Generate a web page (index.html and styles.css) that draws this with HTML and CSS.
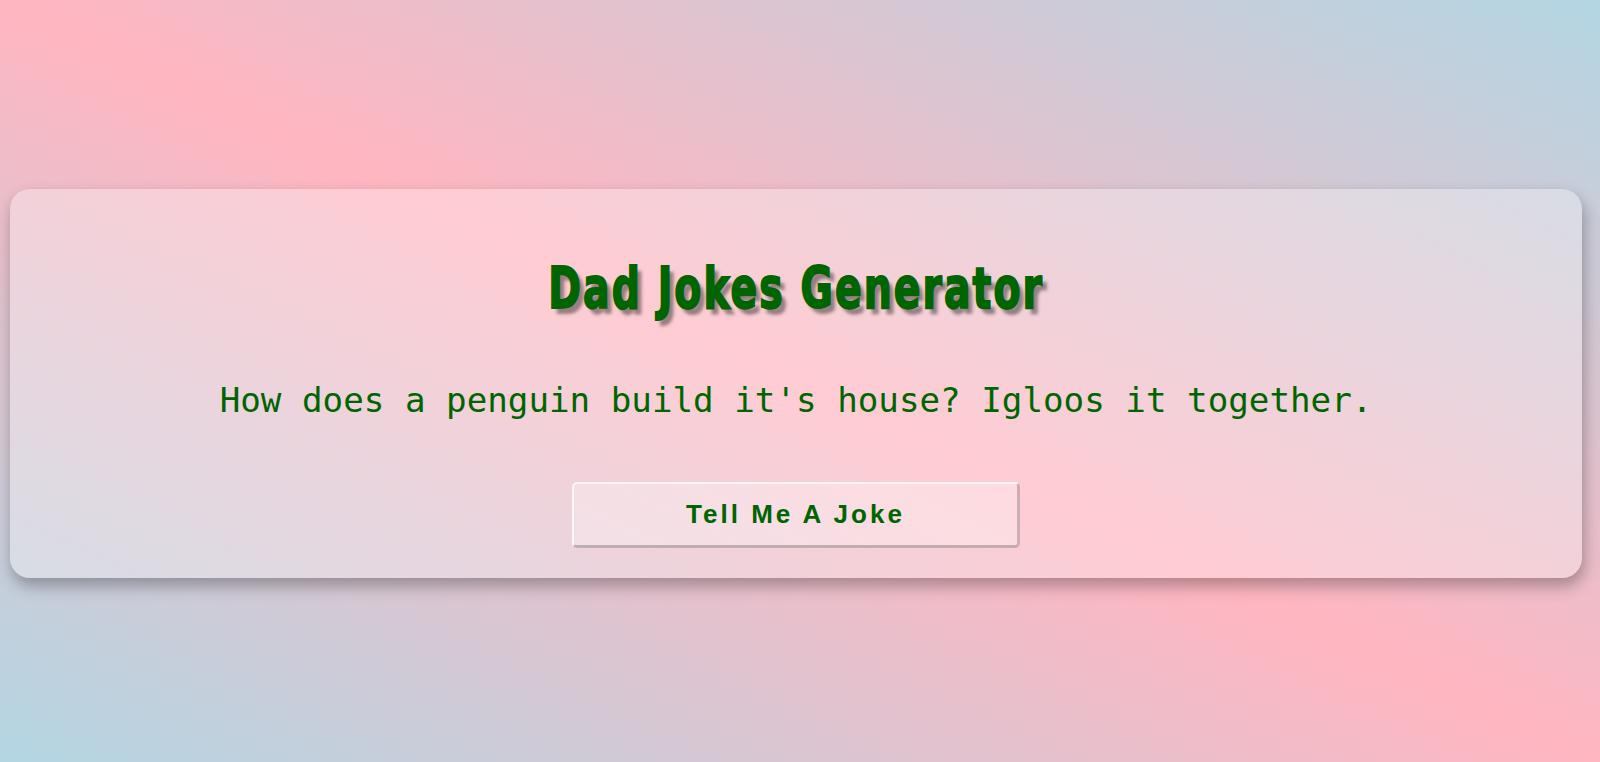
FILE: index.html
```html
<!DOCTYPE html>
<html lang="en">
<head>
<meta charset="utf-8">
<title>Dad Jokes Generator</title>
<link rel="stylesheet" href="styles.css">
</head>
<body>
<main class="page">
  <section class="card">
    <h1 class="title">Dad Jokes Generator</h1>
    <p class="joke">How does a penguin build it's house? Igloos it together.</p>
    <button class="btn" type="button">Tell Me A Joke</button>
  </section>
</main>
</body>
</html>
```

FILE: styles.css
```css
html, body {
  margin: 0;
  height: 100%;
}

body {
  background: linear-gradient(to top right, #b3d6e3, #ffb6c1, #b3d6e3);
  overflow: hidden;
}

.page {
  padding: 189px 18px 0 10px;
}

.card {
  height: 389px;
  box-sizing: border-box;
  display: flex;
  flex-direction: column;
  align-items: center;
  padding: 71px 0 30px;
  background: rgba(255, 255, 255, 0.3);
  border-radius: 20px;
  box-shadow: 2px 8px 16px rgba(0, 0, 0, 0.3);
}

.title {
  margin: 0;
  font-family: Impact, "DejaVu Sans", sans-serif;
  font-weight: 700;
  font-size: 57px;
  line-height: 57px;
  letter-spacing: 3px;
  color: #006400;
  -webkit-text-stroke: 2px #006400;
  text-shadow: 7px 6px 4px rgba(0, 0, 0, 0.4);
  transform: scaleX(0.69);
}

.joke {
  margin: 63px 0 0;
  font-family: "DejaVu Sans Mono", "Liberation Mono", monospace;
  font-size: 34.2px;
  line-height: 40px;
  color: #006400;
}

.btn {
  margin-top: 62px;
  width: 448px;
  height: 66px;
  box-sizing: border-box;
  border-style: solid;
  border-width: 2px 3px 3px 2px;
  border-color: rgba(255, 255, 255, 0.75) rgba(0, 0, 0, 0.2) rgba(0, 0, 0, 0.22) rgba(255, 255, 255, 0.75);
  border-radius: 5px;
  background: rgba(255, 255, 255, 0.3);
  font-family: "Liberation Sans", Arial, sans-serif;
  font-weight: 700;
  font-size: 26px;
  letter-spacing: 3px;
  color: #006400;
  cursor: pointer;
}
```
